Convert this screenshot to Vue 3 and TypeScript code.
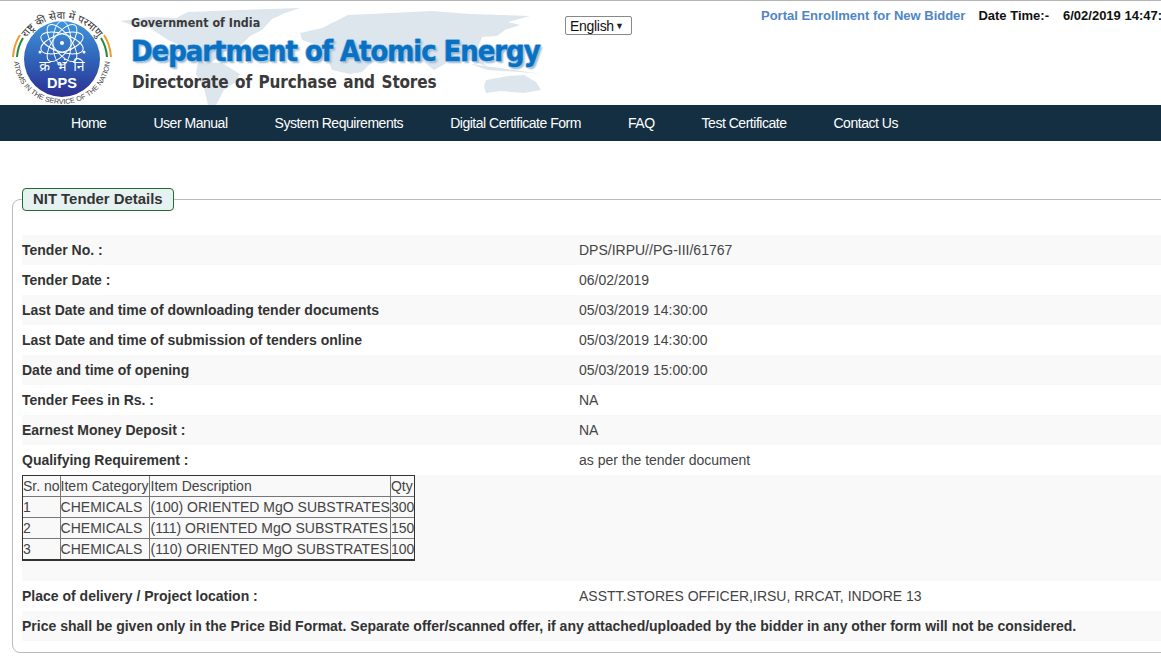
<script setup lang="ts">
const links = ['Home', 'User Manual', 'System Requirements', 'Digital Certificate Form', 'FAQ', 'Test Certificate', 'Contact Us']
const rows: [string, string][] = [
  ['Tender No. :', 'DPS/IRPU//PG-III/61767'],
  ['Tender Date :', '06/02/2019'],
  ['Last Date and time of downloading tender documents', '05/03/2019 14:30:00'],
  ['Last Date and time of submission of tenders online', '05/03/2019 14:30:00'],
  ['Date and time of opening', '05/03/2019 15:00:00'],
  ['Tender Fees in Rs. :', 'NA'],
  ['Earnest Money Deposit :', 'NA'],
  ['Qualifying Requirement :', 'as per the tender document'],
]
const items = [
  ['1', 'CHEMICALS', '(100) ORIENTED MgO SUBSTRATES', '300'],
  ['2', 'CHEMICALS', '(111) ORIENTED MgO SUBSTRATES', '150'],
  ['3', 'CHEMICALS', '(110) ORIENTED MgO SUBSTRATES', '100'],
]
</script>

<template>
  <div class="page">
    <header class="banner">
      <svg class="map" width="560" height="104" viewBox="0 1 560 104" aria-hidden="true">
        <g fill="#dde5ed">
          <path d="M120 21 L150 17 L176 18 L188 12 L240 10 L300 8 L285 13 L272 19 L262 30 L250 36 L238 48 L224 52 L212 62 L198 60 L186 48 L168 40 L150 28 L132 25 Z" />
          <path d="M198 62 L222 63 L240 74 L236 82 L224 90 L216 105 L208 105 L204 88 L196 74 Z" />
          <path d="M300 33 L322 28 L348 15 L372 14 L390 13 L432 11 L470 14 L530 16 L508 22 L520 25 L505 30 L497 36 L482 37 L476 52 L486 66 L470 60 L452 60 L434 70 L424 62 L400 58 L372 62 L362 72 L350 74 L332 70 L326 54 L314 44 L302 40 Z" />
          <path d="M470 64 L500 68 L542 74 L520 72 L488 70 Z" />
          <path d="M484 86 L486 80 L508 76 L524 75 L536 82 L541 90 L524 93 L500 91 L486 93 Z" />
        </g>
      </svg>
      <svg class="logo" width="120" height="104" viewBox="0 1 120 104" role="img" aria-label="DPS emblem">
        <defs>
          <linearGradient id="disc" x1="0" y1="0" x2="0" y2="1">
            <stop offset="0" stop-color="#3f95dc" />
            <stop offset="0.55" stop-color="#2f5fb5" />
            <stop offset="1" stop-color="#2d2f92" />
          </linearGradient>
          <path id="arcTop" d="M19 62 A43 43 0 0 1 105 62" />
          <path id="arcBot" d="M14 59 A48 45 0 0 0 110 59" />
        </defs>
        <circle cx="62" cy="59" r="38" fill="url(#disc)" />
        <g fill="none" stroke="#fff" stroke-width="1">
          <ellipse cx="62" cy="43" rx="9" ry="22" />
          <ellipse cx="62" cy="43" rx="9" ry="22" transform="rotate(36 62 43)" />
          <ellipse cx="62" cy="43" rx="9" ry="22" transform="rotate(72 62 43)" />
          <ellipse cx="62" cy="43" rx="9" ry="22" transform="rotate(108 62 43)" />
          <ellipse cx="62" cy="43" rx="9" ry="22" transform="rotate(144 62 43)" />
        </g>
        <g fill="#fff">
          <circle cx="62" cy="43" r="2" />
          <circle cx="40" cy="52" r="1.5" />
          <circle cx="84" cy="52" r="1.5" />
        </g>
        <path d="M20 35 A46 46 0 0 0 13 57" fill="none" stroke="#f29a2e" stroke-width="2" />
        <path d="M23 38 A42 42 0 0 0 17 57" fill="none" stroke="#1e8c3a" stroke-width="2" />
        <path d="M104 35 A46 46 0 0 1 111 57" fill="none" stroke="#f29a2e" stroke-width="2" />
        <path d="M101 38 A42 42 0 0 1 107 57" fill="none" stroke="#1e8c3a" stroke-width="2" />
        <text font-family="'Noto Sans','DejaVu Sans',sans-serif" font-size="10.5" fill="#333">
          <textPath href="#arcTop" startOffset="50%" text-anchor="middle">राष्ट्र की सेवा में परमाणु</textPath>
        </text>
        <text font-family="'Liberation Sans',sans-serif" font-size="7.2" fill="#444">
          <textPath href="#arcBot" startOffset="50%" text-anchor="middle">ATOMS IN THE SERVICE OF THE NATION</textPath>
        </text>
        <text x="62" y="71" text-anchor="middle" font-family="'Noto Sans','DejaVu Sans',sans-serif" font-size="14" word-spacing="3" fill="#fff">क्र भं नि</text>
        <text x="62" y="88" text-anchor="middle" font-family="'Liberation Sans',sans-serif" font-weight="700" font-size="14.5" fill="#fff">DPS</text>
      </svg>
      <div class="titles">
        <div class="gov">Government of India</div>
        <div class="dept">Department of Atomic Energy</div>
        <div class="dir">Directorate of Purchase and Stores</div>
      </div>
      <div class="lang"><span class="lang-text">English</span><span class="caret">▼</span></div>
      <div class="top-right">
        <a class="enroll">Portal Enrollment for New Bidder</a>
        <span class="dt">Date Time:-</span>
        <span class="dv">6/02/2019 14:47:</span>
      </div>
    </header>

    <nav class="nav">
      <a v-for="l in links" :key="l">{{ l }}</a>
    </nav>

    <fieldset class="box">
      <legend>NIT Tender Details</legend>
      <div v-for="r in rows" :key="r[0]" class="row">
        <div class="k">{{ r[0] }}</div>
        <div class="v">{{ r[1] }}</div>
      </div>
      <div class="tbl-row">
        <table>
          <tbody>
            <tr><td>Sr. no</td><td>Item Category</td><td>Item Description</td><td>Qty</td></tr>
            <tr v-for="it in items" :key="it[0]">
              <td v-for="(c, i) in it" :key="i">{{ c }}</td>
            </tr>
          </tbody>
        </table>
      </div>
      <div class="row plain">
        <div class="k">Place of delivery / Project location :</div>
        <div class="v">ASSTT.STORES OFFICER,IRSU, RRCAT, INDORE 13</div>
      </div>
      <div class="row full">
        <div class="k">Price shall be given only in the Price Bid Format. Separate offer/scanned offer, if any attached/uploaded by the bidder in any other form will not be considered.</div>
      </div>
    </fieldset>
  </div>
</template>

<style>
html, body { margin: 0; background: #fff; overflow: hidden; }
</style>

<style scoped>
.page {
  width: 1161px;
  height: 664px;
  overflow: hidden;
  font-family: "Liberation Sans", Arial, sans-serif;
  color: #333;
  font-size: 14px;
}
.banner {
  position: relative;
  height: 104px;
  border-top: 1px solid #b5b5b5;
  display: flex;
  align-items: flex-start;
  overflow: hidden;
}
.map { position: absolute; left: 0; top: 0; }
.logo { position: relative; flex: none; }
.titles {
  position: relative;
  flex: none;
  width: 434px;
  margin-left: 11px;
  padding-top: 15px;
  color: #3a3a3a;
  font-family: "DejaVu Sans", sans-serif;
  font-weight: 700;
  white-space: nowrap;
}
.gov { font-size: 12.4px; line-height: 14px; font-stretch: condensed; }
.dept {
  margin-top: 4px;
  font-stretch: condensed;
  font-size: 29px;
  line-height: 34px;
  color: #0a70c2;
  letter-spacing: -1.1px;
  -webkit-text-stroke: 0.4px #0a70c2;
  text-shadow: 1px 0 0 #a9d0ee, -1px 0 0 #a9d0ee, 0 1px 0 #a9d0ee, 0 -1px 0 #a9d0ee, 2px 2px 2px #9bb4c8;
}
.dir {
  margin-top: 4px;
  margin-left: 1px;
  font-size: 17px;
  line-height: 20px;
  font-stretch: condensed;
  letter-spacing: -0.17px;
  word-spacing: 1.5px;
}
.lang {
  position: relative;
  flex: none;
  margin-top: 15px;
  width: 61px;
  height: 17px;
  border: 1px solid #888;
  border-radius: 2px;
  background: #fff;
  display: flex;
  align-items: center;
  justify-content: space-between;
  padding: 0 0 0 4px;
  color: #111;
  font-size: 14px;
}
.lang-text { letter-spacing: -0.3px; }
.caret { font-size: 9px; margin-right: 7px; color: #222; }
.top-right {
  position: relative;
  flex: none;
  margin-left: 129px;
  margin-top: 7px;
  display: flex;
  font-size: 13px;
  line-height: 15px;
  font-weight: 700;
  white-space: nowrap;
}
.enroll { color: #4f86c6; }
.dt { margin-left: 13px; color: #111; }
.dv { margin-left: 14px; color: #111; }
.nav {
  height: 35px;
  padding-bottom: 1px;
  background: #152f42;
  display: flex;
  align-items: center;
  gap: 47px;
  padding-left: 71px;
}
.nav a { color: #fff; font-size: 14px; letter-spacing: -0.48px; white-space: nowrap; }
.box {
  margin: 47px 0 0 12px;
  width: 1180px;
  height: 465px;
  box-sizing: border-box;
  border: 1px solid #bbb;
  border-radius: 8px;
  padding: 24px 0 0 9px;
  min-width: 0;
}
legend {
  margin: 0 13px 0 0;
  padding: 0 10px;
  height: 23px;
  line-height: 21px;
  box-sizing: border-box;
  border: 1px solid #1f6b2f;
  border-radius: 4px;
  background: #e6f1f1;
  color: #333;
  font-size: 14.9px;
  font-weight: 700;
}
.row {
  display: flex;
  height: 30px;
  align-items: center;
  line-height: 30px;
}
.row:nth-of-type(odd) { background: #f9f9f9; }
.row:nth-of-type(even) { background: #fff; }
.row.plain { background: #fff; }
.row.full { background: #f9f9f9; }
.k { width: 557px; flex: none; font-weight: 700; white-space: nowrap; }
.full .k { width: auto; }
.v { color: #444; }
.tbl-row { height: 106px; background: #f9f9f9; }
table {
  border-collapse: separate;
  border-spacing: 0;
  border: 1px solid #333;
  border-bottom-width: 2px;
  color: #444;
  font-size: 14px;
  line-height: 20px;
}
td { border-right: 1px solid #777; border-bottom: 1px solid #777; padding: 0; white-space: nowrap; }
td:nth-child(3) { padding-left: 1px; }
td:last-child { border-right: 0; }
tr:last-child td { border-bottom: 0; }
</style>
